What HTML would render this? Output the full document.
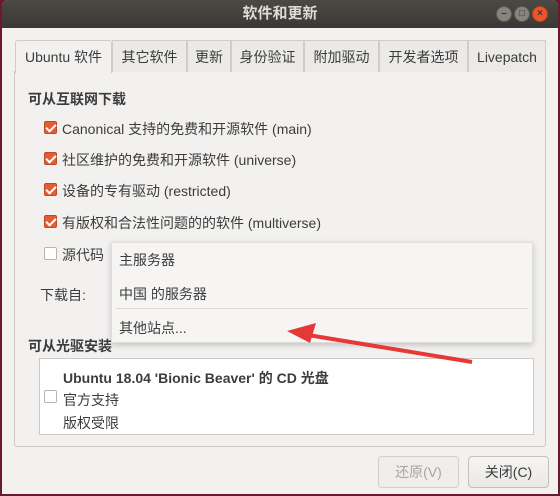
<!DOCTYPE html>
<html><head><meta charset="utf-8"><style>
*{margin:0;padding:0;box-sizing:border-box}
body{width:560px;height:496px;background:#6b1a2c;font-family:"Liberation Sans","Noto Sans CJK SC",sans-serif;font-size:14px;color:#3c3c3c;position:relative;overflow:hidden}
.win{position:absolute;left:2px;top:0;width:556px;height:494px;background:#f2f1f0;border-radius:6px 6px 0 0;overflow:hidden}
.title{position:absolute;left:0;top:0;width:556px;height:28px;background:linear-gradient(#4a4944,#3a3935);color:#dfdbd2;text-align:center;line-height:27px;font-size:15px;font-weight:bold}
.wb{position:absolute;top:6px;width:16px;height:16px;border-radius:50%;background:#86847c;border:1px solid #5a5953;color:#3a3935;font-size:10px;line-height:14px;text-align:center;font-weight:bold}
.a{position:absolute;white-space:nowrap}
.tab{position:absolute;top:40px;height:32px;border:1px solid #d0cdc8;border-bottom:none;background:#ebeae8;line-height:32px;text-align:center;font-size:14px}
.panel{position:absolute;left:12px;top:71px;width:532px;height:376px;border:1px solid #cdcac5;border-radius:0 3px 3px 3px;background:#f2f1f0}
.cb{position:absolute;width:13px;height:13px;border-radius:2px}
.on{background:#e05f36;border:1px solid #b94a28}
.on::after{content:"";position:absolute;left:3px;top:0px;width:4px;height:8px;border:solid #fff;border-width:0 2px 2px 0;transform:rotate(45deg)}
.off{background:#fff;border:1px solid #b8b5b0}
.btn{position:absolute;top:456px;height:32px;border:1px solid #c4c1bb;border-radius:4px;line-height:30px;text-align:center;font-size:14px}
</style></head><body>
<div class="win">
<div class="title">软件和更新</div>
<div class="wb" style="left:494px">–</div>
<div class="wb" style="left:512px">□</div>
<div class="wb" style="left:530px;background:#e9562a;border-color:#b8421e">×</div>
<div class="panel"></div>
<div class="tab" style="left:13px;width:97px;background:#f2f1f0;height:33px;border-radius:3px 3px 0 0">Ubuntu 软件</div>
<div class="tab" style="left:110px;width:75px">其它软件</div>
<div class="tab" style="left:185px;width:44px">更新</div>
<div class="tab" style="left:229px;width:73px">身份验证</div>
<div class="tab" style="left:302px;width:75px">附加驱动</div>
<div class="tab" style="left:377px;width:89px">开发者选项</div>
<div class="tab" style="left:466px;width:78px">Livepatch</div>
<div class="a" style="left:26px;top:89px;font-weight:bold">可从互联网下载</div>
<div class="cb on" style="left:42px;top:121px"></div><div class="a" style="left:60px;top:119px">Canonical 支持的免费和开源软件 (main)</div>
<div class="cb on" style="left:42px;top:152px"></div><div class="a" style="left:60px;top:150px">社区维护的免费和开源软件 (universe)</div>
<div class="cb on" style="left:42px;top:183px"></div><div class="a" style="left:60px;top:181px">设备的专有驱动 (restricted)</div>
<div class="cb on" style="left:42px;top:215px"></div><div class="a" style="left:60px;top:213px">有版权和合法性问题的的软件 (multiverse)</div>
<div class="cb off" style="left:42px;top:247px"></div><div class="a" style="left:60px;top:245px">源代码</div>
<div class="a" style="left:38px;top:285px">下载自:</div>
<div class="a" style="left:26px;top:336px;font-weight:bold">可从光驱安装</div>
<div style="position:absolute;left:37px;top:358px;width:495px;height:77px;background:#fff;border:1px solid #cdcac5"></div>
<div class="a" style="left:61px;top:368px;font-weight:bold">Ubuntu 18.04 'Bionic Beaver' 的 CD 光盘</div>
<div class="cb off" style="left:42px;top:390px"></div>
<div class="a" style="left:61px;top:390px">官方支持</div>
<div class="a" style="left:61px;top:413px">版权受限</div>
<div style="position:absolute;left:109px;top:242px;width:422px;height:101px;background:#f6f5f4;border:1px solid #e0deda;box-shadow:0 2px 6px rgba(0,0,0,.2)"></div>
<div class="a" style="left:117px;top:250px">主服务器</div>
<div class="a" style="left:117px;top:284px">中国 的服务器</div>
<div style="position:absolute;left:114px;top:308px;width:412px;height:1px;background:#dcdad6"></div>
<div class="a" style="left:117px;top:318px">其他站点...</div>
<svg style="position:absolute;left:0;top:0" width="556" height="494"><line x1="300" y1="334" x2="470" y2="362" stroke="#e53935" stroke-width="4"/><polygon points="285,331 314,323 308,343" fill="#e53935"/></svg>
<div class="btn" style="left:376px;width:81px;color:#a8a6a2;background:#efeeec;border-color:#d3d0cb">还原(V)</div>
<div class="btn" style="left:466px;width:81px;background:linear-gradient(#f6f5f4,#e9e8e6)">关闭(C)</div>
</div>
</body></html>
